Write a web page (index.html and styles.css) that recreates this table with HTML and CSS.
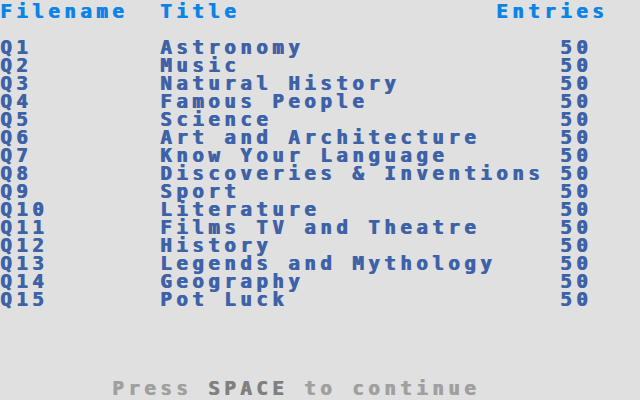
FILE: index.html
```html
<!DOCTYPE html>
<html>
<head>
<meta charset="utf-8">
<link rel="stylesheet" href="styles.css">
</head>
<body>
<div class="screen">
  <div class="row head"><span class="c1">Filename</span><span class="c2">Title</span><span class="c3">Entries</span></div>
  <div class="row blank"></div>
  <div class="row"><span class="c1">Q1</span><span class="c2">Astronomy</span><span class="c3 num">50</span></div>
  <div class="row"><span class="c1">Q2</span><span class="c2 m">Music</span><span class="c3 num">50</span></div>
  <div class="row"><span class="c1">Q3</span><span class="c2">Natural History</span><span class="c3 num">50</span></div>
  <div class="row"><span class="c1">Q4</span><span class="c2">Famous People</span><span class="c3 num">50</span></div>
  <div class="row"><span class="c1">Q5</span><span class="c2">Science</span><span class="c3 num">50</span></div>
  <div class="row"><span class="c1">Q6</span><span class="c2">Art and Architecture</span><span class="c3 num">50</span></div>
  <div class="row"><span class="c1">Q7</span><span class="c2">Know Your Language</span><span class="c3 num">50</span></div>
  <div class="row"><span class="c1">Q8</span><span class="c2">Discoveries &amp; Inventions</span><span class="c3 num">50</span></div>
  <div class="row"><span class="c1">Q9</span><span class="c2">Sport</span><span class="c3 num">50</span></div>
  <div class="row"><span class="c1">Q10</span><span class="c2">Literature</span><span class="c3 num">50</span></div>
  <div class="row"><span class="c1">Q11</span><span class="c2">Films TV and Theatre</span><span class="c3 num">50</span></div>
  <div class="row"><span class="c1">Q12</span><span class="c2">History</span><span class="c3 num">50</span></div>
  <div class="row"><span class="c1">Q13</span><span class="c2">Legends and Mythology</span><span class="c3 num">50</span></div>
  <div class="row"><span class="c1">Q14</span><span class="c2">Geography</span><span class="c3 num">50</span></div>
  <div class="row"><span class="c1">Q15</span><span class="c2">Pot Luck</span><span class="c3 num">50</span></div>
  <div class="footer">Press <span class="key">SPACE</span> to continue</div>
</div>
</body>
</html>
```
FILE: styles.css
```css
html, body {
  margin: 0;
  padding: 0;
  background: #e0e0e0;
}
.screen {
  width: 640px;
  height: 400px;
  box-sizing: border-box;
  padding: 2px 0 0 0;
  font-family: "DejaVu Sans Mono", "Liberation Mono", monospace;
  font-weight: bold;
  font-size: 19px;
  letter-spacing: 4.56px;
  line-height: 18px;
  color: #3d62a8;
  text-shadow: 1px 0 0 currentColor;
  overflow: hidden;
}
.row {
  display: grid;
  grid-template-columns: 160px 336px auto;
  height: 18px;
  white-space: pre;
}
.head {
  color: #0c84e6;
}
.num {
  padding-left: 64px;
}
.footer {
  margin-top: 71px;
  padding-left: 112px;
  color: #a0a0a0;
  white-space: pre;
}
.key {
  color: #808080;
}
```
